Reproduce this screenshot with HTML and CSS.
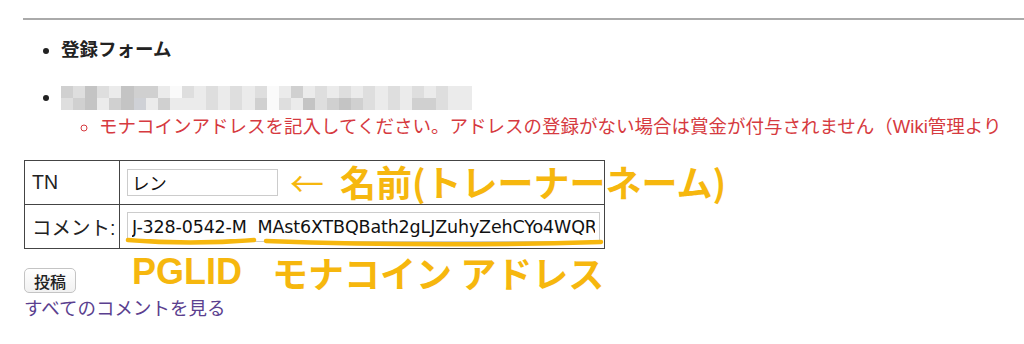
FILE: index.html
```html
<!DOCTYPE html>
<html lang="ja">
<head>
    <meta charset="UTF-8">
    <title>コメント登録</title>
    <link rel="stylesheet" href="styles.css">
</head>
<body>
    <hr class="rule">

    <ul class="main-list">
        <li class="form-title">登録フォーム</li>
        <li class="blur-item">
            <span class="blur">
                <i class="c"></i><i class="b"></i><i class="d"></i><i class="b"></i><i class="a"></i><i class="d"></i><i class="c"></i><i class="c"></i><i class="a"></i><i class="w"></i><i class="b"></i><i class="a"></i><i class="b"></i><i class="a"></i><i class="b"></i><i class="a"></i><i class="b"></i><i class="w"></i><i class="a"></i><i class="c"></i><i class="a"></i><i class="b"></i><i class="a"></i><i class="b"></i><i class="a"></i><i class="b"></i><i class="a"></i><i class="b"></i><i class="a"></i><i class="b"></i><i class="a"></i><i class="b"></i><i class="a"></i><i class="a"></i>
                <i class="b"></i><i class="c"></i><i class="d"></i><i class="a"></i><i class="c"></i><i class="d"></i><i class="e"></i><i class="a"></i><i class="c"></i><i class="a"></i><i class="a"></i><i class="a"></i><i class="b"></i><i class="a"></i><i class="b"></i><i class="a"></i><i class="c"></i><i class="w"></i><i class="b"></i><i class="a"></i><i class="d"></i><i class="b"></i><i class="c"></i><i class="d"></i><i class="c"></i><i class="b"></i><i class="a"></i><i class="b"></i><i class="a"></i><i class="c"></i><i class="c"></i><i class="b"></i><i class="a"></i><i class="a"></i>
            </span>
            <ul class="sub-list">
                <li class="notice">モナコインアドレスを記入してください。アドレスの登録がない場合は賞金が付与されません（Wiki管理より</li>
            </ul>
        </li>
    </ul>

    <table class="comment-form">
        <tr>
            <td class="label">TN</td>
            <td class="field"><input type="text" class="name-input" value="レン"></td>
        </tr>
        <tr>
            <td class="label">コメント:</td>
            <td class="field"><input type="text" class="comment-input" value="J-328-0542-M  MAst6XTBQBath2gLJZuhyZehCYo4WQRF"></td>
        </tr>
    </table>

    <button type="button" class="post-btn">投稿</button>
    <a href="#" class="all-comments">すべてのコメントを見る</a>

    <!-- hand drawn notes on top of the screenshot -->
    <div class="note note-name"><span class="arrow">←</span>名前(トレーナーネーム)</div>
    <div class="note note-id">PGLID</div>
    <div class="note note-addr">モナコイン アドレス</div>
    <svg class="marks" width="1024" height="344" viewBox="0 0 1024 344">
        <path d="M128 240 Q190 245 254 240" />
        <path d="M266 241 Q430 247 601 242" />
    </svg>
</body>
</html>
```

FILE: styles.css
```css
body {
    margin: 0;
    padding: 0 0 0 24px;
    font-family: 'Liberation Sans', 'Noto Sans CJK JP', sans-serif;
    font-size: 18.5px;
    color: #222;
    background: #fff;
    position: relative;
    height: 344px;
    overflow: hidden;
}

.rule {
    margin: 18px 0 0 -1px;
    border: 0;
    border-top: 2px solid #aaa;
}

.main-list {
    margin: 17px 0 0;
    padding-left: 37px;
    line-height: 26px;
}

.form-title {
    font-weight: bold;
    margin-bottom: 21px;
}

.blur {
    display: inline-grid;
    grid-template-columns: repeat(34, 12.1px);
    grid-template-rows: 12px 12px;
    vertical-align: middle;
    margin-top: -1px;
}

.blur i { display: block; }
.blur .w { background: #fafafa; }
.blur .a { background: #ebebeb; }
.blur .b { background: #dedede; }
.blur .c { background: #d0d0d0; }
.blur .d { background: #c4c4c4; }
.blur .e { background: #cfd1d6; }

.sub-list {
    list-style: circle;
    margin: 4px 0 0;
    padding-left: 38px;
    line-height: 26px;
}

.notice {
    color: #d63a40;
    white-space: nowrap;
}

.comment-form {
    border-collapse: collapse;
    margin-top: 20px;
    width: 581px;
}

.comment-form td {
    border: 1px solid #444;
    height: 43px;
    padding: 0;
}

.comment-form .label {
    width: 87px;
    padding-left: 7px;
    font-size: 19.5px;
}

.comment-form .field {
    padding-left: 7px;
}

.comment-form input {
    font-family: 'DejaVu Sans', 'Noto Sans CJK JP', sans-serif;
    font-size: 17.5px;
    letter-spacing: -0.15px;
    color: #111;
    border: 1px solid #ccc;
    padding: 0 4px;
    box-sizing: border-box;
    display: block;
}

.name-input {
    width: 151px;
    height: 27px;
}

.comment-input {
    width: 473px;
    height: 30px;
}

.post-btn {
    display: block;
    margin-top: 19px;
    width: 52px;
    height: 25px;
    padding: 0;
    font-family: 'Noto Sans CJK JP', sans-serif;
    font-size: 16px;
    font-weight: 500;
    color: #222;
    background: linear-gradient(#fff, #f1f1f1);
    border: 1px solid #c4c4c4;
    border-radius: 5px;
}

.all-comments {
    display: block;
    margin-top: 3px;
    line-height: 26px;
    color: #5b3f8f;
    text-decoration: none;
}

.note {
    position: absolute;
    color: #f6b70e;
    font-family: 'Noto Sans CJK JP', sans-serif;
    font-weight: bold;
    font-size: 36px;
    line-height: 40px;
    white-space: nowrap;
}

.note .arrow {
    font-weight: normal;
    font-size: 34px;
    margin-right: 16px;
}

.note-name {
    left: 290px;
    top: 161px;
}

.note-id {
    left: 132px;
    top: 252px;
    font-family: 'Liberation Sans', sans-serif;
    font-size: 36px;
}

.note-addr {
    left: 272px;
    top: 252px;
}

.marks {
    position: absolute;
    left: 0;
    top: 0;
    pointer-events: none;
}

.marks path {
    fill: none;
    stroke: #f6b70e;
    stroke-width: 4.5;
    stroke-linecap: round;
}
```
